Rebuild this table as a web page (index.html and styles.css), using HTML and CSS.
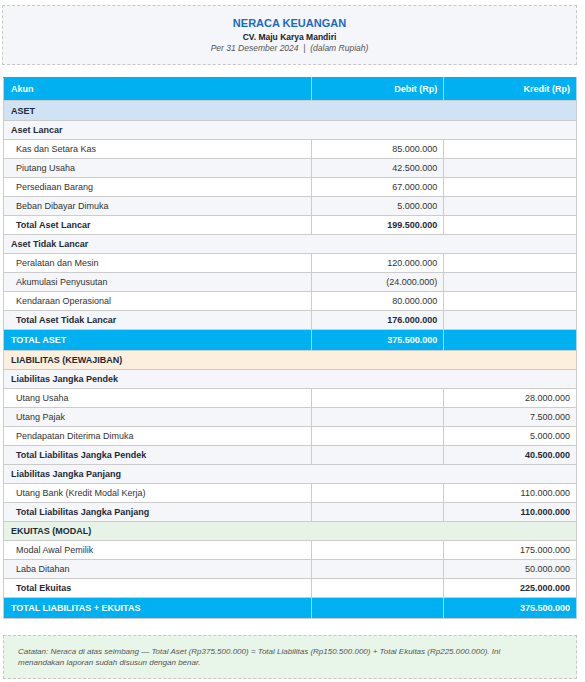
FILE: index.html
```html
<!DOCTYPE html>
<html>
<head>
    <meta charset="UTF-8">
    <title>Neraca Keuangan - CV. Maju Karya Mandiri</title>
    <link rel="stylesheet" href="styles.css">
</head>
<body>
    <div class="page">
        <!-- Report header -->
        <div class="report-header">
            <h1>NERACA KEUANGAN</h1>
            <div class="company">CV. Maju Karya Mandiri</div>
            <div class="period">Per 31 Desember 2024 &nbsp;|&nbsp; (dalam Rupiah)</div>
        </div>

        <!-- Balance sheet table -->
        <table class="balance-table">
            <colgroup>
                <col class="col-akun">
                <col class="col-num">
                <col class="col-num">
            </colgroup>
            <thead>
                <tr>
                    <th>Akun</th>
                    <th class="num">Debit (Rp)</th>
                    <th class="num">Kredit (Rp)</th>
                </tr>
            </thead>
            <tbody>
                <tr class="section section-aset"><td colspan="3">ASET</td></tr>
                <tr class="subhead"><td colspan="3">Aset Lancar</td></tr>
                <tr><td class="item">Kas dan Setara Kas</td><td class="num">85.000.000</td><td class="num"></td></tr>
                <tr class="alt"><td class="item">Piutang Usaha</td><td class="num">42.500.000</td><td class="num"></td></tr>
                <tr><td class="item">Persediaan Barang</td><td class="num">67.000.000</td><td class="num"></td></tr>
                <tr class="alt"><td class="item">Beban Dibayar Dimuka</td><td class="num">5.000.000</td><td class="num"></td></tr>
                <tr class="subtotal"><td class="item">Total Aset Lancar</td><td class="num">199.500.000</td><td class="num"></td></tr>
                <tr class="subhead"><td colspan="3">Aset Tidak Lancar</td></tr>
                <tr><td class="item">Peralatan dan Mesin</td><td class="num">120.000.000</td><td class="num"></td></tr>
                <tr class="alt"><td class="item">Akumulasi Penyusutan</td><td class="num">(24.000.000)</td><td class="num"></td></tr>
                <tr><td class="item">Kendaraan Operasional</td><td class="num">80.000.000</td><td class="num"></td></tr>
                <tr class="alt subtotal"><td class="item">Total Aset Tidak Lancar</td><td class="num">176.000.000</td><td class="num"></td></tr>
                <tr class="grand-total"><td>TOTAL ASET</td><td class="num">375.500.000</td><td class="num"></td></tr>

                <tr class="section section-liab"><td colspan="3">LIABILITAS (KEWAJIBAN)</td></tr>
                <tr class="subhead"><td colspan="3">Liabilitas Jangka Pendek</td></tr>
                <tr><td class="item">Utang Usaha</td><td class="num"></td><td class="num">28.000.000</td></tr>
                <tr class="alt"><td class="item">Utang Pajak</td><td class="num"></td><td class="num">7.500.000</td></tr>
                <tr><td class="item">Pendapatan Diterima Dimuka</td><td class="num"></td><td class="num">5.000.000</td></tr>
                <tr class="alt subtotal"><td class="item">Total Liabilitas Jangka Pendek</td><td class="num"></td><td class="num">40.500.000</td></tr>
                <tr class="subhead"><td colspan="3">Liabilitas Jangka Panjang</td></tr>
                <tr><td class="item">Utang Bank (Kredit Modal Kerja)</td><td class="num"></td><td class="num">110.000.000</td></tr>
                <tr class="alt subtotal"><td class="item">Total Liabilitas Jangka Panjang</td><td class="num"></td><td class="num">110.000.000</td></tr>

                <tr class="section section-equity"><td colspan="3">EKUITAS (MODAL)</td></tr>
                <tr><td class="item">Modal Awal Pemilik</td><td class="num"></td><td class="num">175.000.000</td></tr>
                <tr class="alt"><td class="item">Laba Ditahan</td><td class="num"></td><td class="num">50.000.000</td></tr>
                <tr class="subtotal"><td class="item">Total Ekuitas</td><td class="num"></td><td class="num">225.000.000</td></tr>
                <tr class="grand-total"><td>TOTAL LIABILITAS + EKUITAS</td><td class="num"></td><td class="num">375.500.000</td></tr>
            </tbody>
        </table>

        <!-- Footnote -->
        <div class="note">
            Catatan: Neraca di atas seimbang — Total Aset (Rp375.500.000) = Total Liabilitas (Rp150.500.000) + Total Ekuitas (Rp225.000.000). Ini menandakan laporan sudah disusun dengan benar.
        </div>
    </div>
</body>
</html>
```

FILE: styles.css
```css
body {
    margin: 0;
    background: #ffffff;
    font-family: "Liberation Sans", Arial, sans-serif;
    color: #333;
}

.page {
    padding: 5px 8px 5px 2px;
}

.report-header {
    background-color: #f5f6fa;
    border: 1px dashed #c8c8c8;
    padding: 11px 10px 10px;
    text-align: center;
}

.report-header h1 {
    margin: 0;
    color: #1a6ac4;
    font-size: 11px;
    line-height: 13px;
    font-weight: bold;
}

.company {
    margin-top: 2px;
    color: #222;
    font-size: 8.5px;
    line-height: 11px;
    font-weight: bold;
}

.period {
    color: #555;
    font-size: 8.5px;
    line-height: 11px;
    font-style: italic;
}

.balance-table {
    width: calc(100% - 1px);
    margin: 12px 0 0 1px;
    border-collapse: collapse;
    table-layout: fixed;
    font-size: 9px;
    line-height: 10px;
}

.col-akun {
    width: 53.7%;
}

.col-num {
    width: 23.15%;
}

.balance-table th,
.balance-table td {
    border: 1px solid #cccccc;
    padding: 4px 6px 4px 7px;
    text-align: left;
    white-space: nowrap;
}

.balance-table th {
    background-color: #00b0f0;
    border-top-color: #00b0f0;
    color: #fff;
    font-weight: bold;
    padding-top: 6px;
    padding-bottom: 6px;
}

.balance-table .num {
    text-align: right;
}

.balance-table td.item {
    padding-left: 12px;
}

.balance-table tbody tr {
    background-color: #fff;
}

.balance-table tr.alt {
    background-color: #f5f6fa;
}

.section td {
    font-weight: bold;
    color: #1e2a38;
}

.section-aset {
    background-color: #cfe3f5 !important;
}

.section-aset td {
    padding-top: 5px;
}

.section-liab {
    background-color: #fdefdd !important;
}

.section-equity {
    background-color: #e6f3e6 !important;
}

.subhead {
    background-color: #f5f6fa !important;
}

.subhead td {
    font-weight: bold;
    color: #1e2a38;
}

.subtotal td {
    font-weight: bold;
    color: #1e2a38;
}

.grand-total {
    background-color: #00b0f0 !important;
}

.grand-total td {
    color: #fff;
    font-weight: bold;
    padding-top: 5px;
    padding-bottom: 5px;
}

.note {
    margin: 16px 0 0 1px;
    background-color: #e8f5e9;
    border: 1px dashed #c8c8c8;
    padding: 10px 60px 10px 14px;
    color: #555;
    font-size: 8px;
    line-height: 11px;
    font-style: italic;
}
```
